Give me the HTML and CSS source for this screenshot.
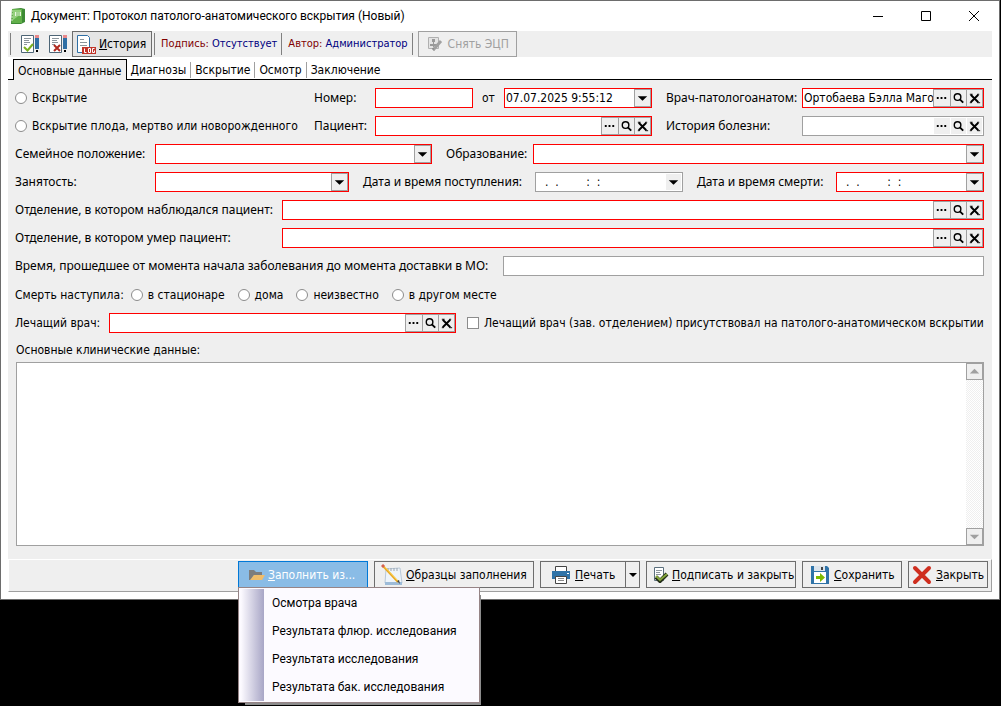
FILE: index.html
```html
<!DOCTYPE html>
<html lang="ru">
<head>
    <meta charset="UTF-8">
    <meta name="viewport" content="width=device-width, initial-scale=1.0">
    <title>Протокол патолого-анатомического вскрытия</title>
    <link rel="stylesheet" href="styles.css">
</head>
<body>
    <!-- shared icons -->
    <svg class="sprite" aria-hidden="true">
        <symbol id="i-dots" viewBox="0 0 16 16"><path d="M3 7h2v2H3zM7 7h2v2H7zM11 7h2v2h-2z"/></symbol>
        <symbol id="i-search" viewBox="0 0 16 16"><circle cx="7" cy="7" r="3.5" fill="none" stroke="#000" stroke-width="1.5"/><path d="M9.5 9.5l3.5 3.5" stroke="#000" stroke-width="2"/></symbol>
        <symbol id="i-clear" viewBox="0 0 16 16"><path d="M4 4.5l8 8M12 4.5l-8 8" stroke="#000" stroke-width="2"/><path d="M3 4h3M11 4h2M3 13h2M11 13h3" stroke="#000"/></symbol>
        <symbol id="i-down" viewBox="0 0 16 16"><path d="M3 6h10L8 11z"/></symbol>
    </svg>

    <div class="window">
        <header class="titlebar">
            <svg class="app-icon" viewBox="0 0 16 18"><path d="M2 2l9-1 4 1v13l-4 2H1z" fill="#3d8a35"/><path d="M2 2h10v14H2z" fill="#62b04a"/><path d="M3 3h8v4l-8 6z" fill="#93d07c"/><path d="M5 5h6v4H5z" fill="#e8f7df"/><path d="M6 6h4M6 8h4" stroke="#62b04a"/><path d="M1 4h2M1 7h2M1 10h2M1 13h2" stroke="#d6ecc9"/></svg>
            <h1>Документ: Протокол патолого-анатомического вскрытия (Новый)</h1>
            <div class="win-buttons">
                <button aria-label="Свернуть"><svg viewBox="0 0 12 12"><path d="M1 6.5h10" stroke="#000"/></svg></button>
                <button aria-label="Развернуть"><svg viewBox="0 0 12 12"><path d="M1.5 1.5h9v9h-9z" fill="none" stroke="#000"/></svg></button>
                <button aria-label="Закрыть окно"><svg viewBox="0 0 12 12"><path d="M1 1l10 10M11 1L1 11" stroke="#000"/></svg></button>
            </div>
        </header>

        <div class="toolbar">
            <span class="sep first"></span>
            <button class="tool" aria-label="Подписать"><svg viewBox="0 0 20 20"><path d="M1.500 1.500h12v17h-12z" fill="#fff" stroke="#4d6576"/><path d="M4 4.500h7M4 6.500h5M4 8.500h6M4 10.500h3" stroke="#8b959c"/><path d="M4 13l3.500 3.500L13 10" fill="none" stroke="#7ab020" stroke-width="2"/><path d="M15 4h4v11h-4z" fill="#2f6fa5"/><path d="M15 1h4v3h-4z" fill="#e8888a"/><path d="M16 16h2v2h-2z"/></svg></button>
            <button class="tool" aria-label="Отменить подпись"><svg viewBox="0 0 20 20"><path d="M1.500 1.500h12v17h-12z" fill="#fff" stroke="#4d6576"/><path d="M4 4.500h7M4 6.500h5M4 8.500h6M4 10.500h3" stroke="#8b959c"/><path d="M6 11l6 6M12 11l-6 6" stroke="#b02a20" stroke-width="2"/><path d="M15 4h4v11h-4z" fill="#2f6fa5"/><path d="M15 1h4v3h-4z" fill="#e8888a"/><path d="M16 16h2v2h-2z"/></svg></button>
            <button class="btn history"><svg class="log-icon" viewBox="0 0 20 20"><path d="M1.500 1.500h10l2 2v15h-12z" fill="#fff" stroke="#2f6fa5"/><path d="M4 5.500h4M4 8.500h7M4 11.500h7" stroke="#8b959c"/><path d="M6 13h14v7H6z" fill="#c0342a"/><path d="M8.500 14.500v4h2M12.500 14.500h2v4h-2zM18.500 14.500h-2v4h2v-2" fill="none" stroke="#fff"/></svg><span><u>И</u>стория</span></button>
            <span class="sep"></span>
            <span class="info"><b>Подпись:</b> Отсутствует</span>
            <span class="sep"></span>
            <span class="info"><b>Автор:</b> Администратор</span>
            <span class="sep"></span>
            <button class="btn unsign" disabled><svg class="icon" viewBox="0 0 16 16"><path d="M1.500 1.500h10v11h-10z" fill="#e4e4e4" stroke="#b0b0b0"/><path d="M5 3h3v3H5zM3 8h7v2H3zM6 6h1v5H6z" fill="#999"/><path d="M14 5l-7 8" stroke="#a0a0a0" stroke-width="3"/><path d="M6 12v2h2" fill="none" stroke="#777"/></svg><span>Снять ЭЦП</span></button>
        </div>

        <nav class="tabs">
            <button class="tab active">Основные данные</button>
            <button class="tab">Диагнозы</button>
            <button class="tab">Вскрытие</button>
            <button class="tab">Осмотр</button>
            <button class="tab">Заключение</button>
        </nav>

        <main class="form">
            <div class="row head">
                <label class="choice"><input type="radio" name="kind">Вскрытие</label>
                <label for="number">Номер:</label>
                <div class="pair">
                    <div class="field required num"><input type="text" id="number"></div>
                    <label for="date">от</label>
                    <div class="field required grow"><input type="text" id="date" value="07.07.2025 9:55:12"><button class="drop" aria-label="Календарь"><svg><use href="#i-down"/></svg></button></div>
                </div>
                <label class="next" for="pathologist">Врач-патологоанатом:</label>
                <div class="field required"><input type="text" id="pathologist" value="Ортобаева Бэлла Магомедовна"><div class="lookup"><button aria-label="Выбрать"><svg><use href="#i-dots"/></svg></button><button aria-label="Найти"><svg><use href="#i-search"/></svg></button><button aria-label="Очистить"><svg><use href="#i-clear"/></svg></button></div></div>
            </div>
            <div class="row head">
                <label class="choice"><input type="radio" name="kind">Вскрытие плода, мертво или новорожденного</label>
                <label for="patient">Пациент:</label>
                <div class="field required"><input type="text" id="patient"><div class="lookup"><button aria-label="Выбрать"><svg><use href="#i-dots"/></svg></button><button aria-label="Найти"><svg><use href="#i-search"/></svg></button><button aria-label="Очистить"><svg><use href="#i-clear"/></svg></button></div></div>
                <label class="next" for="case">История болезни:</label>
                <div class="field"><input type="text" id="case"><div class="lookup"><button aria-label="Выбрать"><svg><use href="#i-dots"/></svg></button><button aria-label="Найти"><svg><use href="#i-search"/></svg></button><button aria-label="Очистить"><svg><use href="#i-clear"/></svg></button></div></div>
            </div>
            <div class="row family">
                <label for="marital">Семейное положение:</label>
                <div class="field required"><select id="marital"><option></option></select><span class="drop"><svg><use href="#i-down"/></svg></span></div>
                <label class="next" for="education">Образование:</label>
                <div class="field required"><select id="education"><option></option></select><span class="drop"><svg><use href="#i-down"/></svg></span></div>
            </div>
            <div class="row dates">
                <label for="job">Занятость:</label>
                <div class="field required"><select id="job"><option></option></select><span class="drop"><svg><use href="#i-down"/></svg></span></div>
                <label class="next" for="admitted">Дата и время поступления:</label>
                <div class="field"><input class="mask" type="text" id="admitted" value=".  .        :  :"><button class="drop" aria-label="Календарь"><svg><use href="#i-down"/></svg></button></div>
                <label class="next" for="died">Дата и время смерти:</label>
                <div class="field required"><input class="mask" type="text" id="died" value=".  .        :  :"><button class="drop" aria-label="Календарь"><svg><use href="#i-down"/></svg></button></div>
            </div>
            <div class="row dept">
                <label for="dept1">Отделение, в котором наблюдался пациент:</label>
                <div class="field required"><input type="text" id="dept1"><div class="lookup"><button aria-label="Выбрать"><svg><use href="#i-dots"/></svg></button><button aria-label="Найти"><svg><use href="#i-search"/></svg></button><button aria-label="Очистить"><svg><use href="#i-clear"/></svg></button></div></div>
            </div>
            <div class="row dept">
                <label for="dept2">Отделение, в котором умер пациент:</label>
                <div class="field required"><input type="text" id="dept2"><div class="lookup"><button aria-label="Выбрать"><svg><use href="#i-dots"/></svg></button><button aria-label="Найти"><svg><use href="#i-search"/></svg></button><button aria-label="Очистить"><svg><use href="#i-clear"/></svg></button></div></div>
            </div>
            <div class="row elapsed">
                <label for="elapsed">Время, прошедшее от момента начала заболевания до момента доставки в МО:</label>
                <div class="field"><input type="text" id="elapsed"></div>
            </div>
            <div class="row place">
                <span>Смерть наступила:</span>
                <label class="choice"><input type="radio" name="place">в стационаре</label>
                <label class="choice"><input type="radio" name="place">дома</label>
                <label class="choice"><input type="radio" name="place">неизвестно</label>
                <label class="choice"><input type="radio" name="place">в другом месте</label>
            </div>
            <div class="row doctor">
                <label for="doctor">Лечащий врач:</label>
                <div class="field required"><input type="text" id="doctor"><div class="lookup"><button aria-label="Выбрать"><svg><use href="#i-dots"/></svg></button><button aria-label="Найти"><svg><use href="#i-search"/></svg></button><button aria-label="Очистить"><svg><use href="#i-clear"/></svg></button></div></div>
                <label class="choice"><input type="checkbox">Лечащий врач (зав. отделением) присутствовал на патолого-анатомическом вскрытии</label>
            </div>
            <div class="clinical">
                <label for="clinical">Основные клинические данные:</label>
                <div class="memo">
                    <textarea id="clinical"></textarea>
                    <div class="scroll">
                        <button aria-label="Вверх"><svg viewBox="0 0 16 16"><path d="M3 10h10L8 5z" fill="#a0a0a0"/></svg></button>
                        <button aria-label="Вниз"><svg viewBox="0 0 16 16"><path d="M3 6h10L8 11z" fill="#a0a0a0"/></svg></button>
                    </div>
                </div>
            </div>
        </main>

        <footer class="actions">
            <div class="fill">
                <button class="btn open"><svg class="icon" viewBox="0 0 16 16"><path d="M0 3h5l2 2h6v3H5l-3 5H0z" fill="#7d7d7d"/><path d="M5 8h11l-3 5H1z" fill="#f0bd6a"/></svg><span><u>З</u>аполнить из...</span></button>
                <div class="menu">
                    <button>Осмотра врача</button>
                    <button>Результата флюр. исследования</button>
                    <button>Результата исследования</button>
                    <button>Результата бак. исследования</button>
                </div>
            </div>
            <button class="btn samples"><svg class="big" viewBox="0 0 22 22"><path d="M5 5l14-1 2 15H4z" fill="#eef4fa" stroke="#b9c8d8"/><path d="M4 18h17v3H4z" fill="#9dbbd8"/><path d="M7 4v3M10 4v3M13 4v3M16 4v3" stroke="#9aa3ad"/><path d="M2 2l15 16" stroke="#e9a820" stroke-width="2"/><path d="M2 1l15 16" stroke="#ffd75e"/><path d="M1 1l2 2" stroke="#d4614f" stroke-width="3"/><path d="M16 17l3 3-1-4z" fill="#444"/></svg><span><u>О</u>бразцы заполнения</span></button>
            <div class="split">
                <button class="btn print"><svg class="big" viewBox="0 0 22 22"><path d="M5.500 2.500h11v6h-11z" fill="#fff" stroke="#444"/><path d="M2 7h18v8H2z" fill="#2f73a8"/><path d="M17 9h2v1h-2z" fill="#fff"/><path d="M5.500 12.500h11v7h-11z" fill="#fff" stroke="#444"/><path d="M8 14.500h6M8 16.500h6" stroke="#888"/></svg><span><u>П</u>ечать</span></button>
                <button class="btn more" aria-label="Ещё"><svg class="arrow" viewBox="0 0 8 8"><path d="M0 2h8L4 6z"/></svg></button>
            </div>
            <button class="btn sign"><svg class="icon" viewBox="0 0 16 16"><path d="M1.500.500h9v13h-9z" fill="#fff" stroke="#5b6f7d"/><path d="M3 3.500h6M3 5.500h4M3 7.500h5" stroke="#8b959c"/><path d="M3 10l4 4 7-7" fill="none" stroke="#26301a" stroke-width="4"/><path d="M3 9l4 4 7-6" fill="none" stroke="#86a83c" stroke-width="2"/></svg><span><u>П</u>одписать и закрыть</span></button>
            <button class="btn save"><svg class="big" viewBox="0 0 22 22"><path d="M2 2h16l2 2v16H2z" fill="#2f73a8"/><path d="M5 2h11v5H5z" fill="#dbe4ec"/><path d="M12 3h2v3h-2z" fill="#444"/><path d="M5 8h12v11H5z" fill="#fff"/><path d="M7 12h4V9l5 4.500-5 4.500v-3H7z" fill="#7fba00"/></svg><span><u>С</u>охранить</span></button>
            <button class="btn close"><svg class="big" viewBox="0 0 22 22"><path d="M4 4l14 14M18 4L4 18" stroke="#cf2e1f" stroke-width="4" stroke-linecap="round"/></svg><span><u>З</u>акрыть</span></button>
        </footer>
    </div>
</body>
</html>
```
FILE: styles.css
```css
* {
    box-sizing: border-box;
}

body {
    min-height: 100vh;
    margin: 0;
    background: #000;
    color: #000;
    font-family: "DejaVu Sans Condensed", sans-serif;
    font-size: 12px;
    line-height: 16px;
}

button,
input,
select,
textarea {
    font: inherit;
    color: inherit;
    margin: 0;
    padding: 0;
    border: none;
    background: none;
    border-radius: 0;
    outline: none;
}

svg {
    display: block;
    flex: none;
}

.sprite {
    display: none;
}

.window {
    margin-right: 1px;
    padding: 0 7px 7px;
    background: #fff;
    border: 1px solid #6d6d6d;
}

/* title bar */
.titlebar {
    display: flex;
    align-items: center;
    height: 30px;
}

.app-icon {
    width: 16px;
    height: 18px;
    margin: 0 5px 0 2px;
}

.titlebar h1 {
    flex: 1;
    margin: 0;
    font-family: Roboto, sans-serif;
    font-size: 12px;
    font-weight: normal;
}

.win-buttons {
    display: flex;
    margin-right: -6px;
}

.win-buttons button {
    display: flex;
    justify-content: center;
    width: 48px;
}

.win-buttons svg {
    width: 12px;
    height: 12px;
}

/* toolbar */
.toolbar {
    display: flex;
    align-items: center;
    height: 26px;
    background: #efefef;
}

.sep {
    width: 1px;
    height: 22px;
    margin: 0 2px;
    background: #808080;
}

.sep.first {
    margin-right: 9px;
}

.tool {
    width: 20px;
}

.tool + .tool {
    margin: 0 4px 0 8px;
}

.tool svg,
.log-icon {
    width: 20px;
    height: 20px;
}

.info {
    padding: 0 2px 0 4px;
    font-size: 11px;
    color: #000080;
}

.info b {
    font-weight: normal;
    color: #800000;
}

.btn {
    display: flex;
    align-items: center;
    gap: 3px;
    height: 26px;
    padding: 0 4px;
    border: 1px solid #6d6d6d;
    background: #efefef;
    white-space: nowrap;
}

.btn.unsign {
    gap: 5px;
    width: 99px;
    margin-left: 3px;
    padding-left: 8px;
    border-color: #a0a0a0;
    color: #a0a0a0;
}

.btn.history {
    width: 80px;
    padding: 0 3px;
    background: #e5e5e5;
}

.icon {
    width: 16px;
    height: 16px;
}

.big {
    width: 22px;
    height: 22px;
}

/* tabs */
.tabs {
    display: flex;
    align-items: flex-end;
    height: 23px;
    padding-left: 5px;
    border-bottom: 1px solid #000;
}

.tab {
    height: 16px;
    margin-bottom: 1px;
    padding: 0 4px;
    white-space: nowrap;
}

.tab + .tab + .tab {
    border-left: 1px solid #a0a0a0;
}

.tab.active {
    height: 21px;
    margin-bottom: -1px;
    padding-top: 2px;
    background: #efefef;
    border: 1px solid #000;
    border-bottom: none;
}

/* form */
.form {
    display: flex;
    flex-direction: column;
    gap: 8px;
    padding: 8px 8px 13px 7px;
    background: #efefef;
}

.row {
    display: grid;
    align-items: center;
    height: 20px;
    white-space: nowrap;
}

.row > label {
    font-family: "Noto Sans", sans-serif;
}

.row > .choice,
.doctor > label {
    font-family: inherit;
}

.row.head {
    grid-template-columns: 299px 61px 277px 150px 1fr;
}

.row.family {
    grid-template-columns: 140px 277px 101px 1fr;
}

.row.dates {
    grid-template-columns: 140px 194px 186px 148px 153px 1fr;
}

.row.dept {
    grid-template-columns: 267px 1fr;
}

.row.elapsed {
    grid-template-columns: 488px 1fr;
}

.row.doctor {
    grid-template-columns: 94px 347px 1fr;
}

.row.place {
    display: flex;
    height: 21px;
}

.place .choice {
    margin-left: 7px;
}

.place .choice + .choice {
    margin-left: 13px;
}

.doctor .choice {
    padding-left: 11px;
}

.next {
    padding-left: 14px;
}

.pair {
    display: flex;
    align-items: center;
}

.pair label {
    width: 31px;
    padding-left: 9px;
}

.pair .num {
    width: 98px;
}

.grow {
    flex: 1;
}

.field {
    display: flex;
    min-width: 0;
    height: 20px;
    background: #fff;
    border: 1px solid #a0a0a0;
}

.field.required {
    border-color: #f00;
}

.field input,
.field select {
    flex: 1;
    width: 0;
    min-width: 0;
    padding-left: 1px;
    appearance: none;
}

.field .mask {
    padding-left: 9px;
    white-space: pre;
}

.drop {
    width: 17px;
    background: #efefef;
    border: 1px solid #fff;
}

.lookup {
    display: flex;
    width: 50px;
    border: 1px solid #fff;
}

.lookup button {
    width: 16px;
    background: #efefef;
}

.lookup button + button {
    border-left: 1px solid #fff;
}

.required .drop,
.required .lookup,
.required .lookup button + button {
    border-color: #a0a0a0;
}

.drop svg,
.lookup svg {
    width: 15px;
    height: 16px;
}

.choice {
    display: flex;
    align-items: center;
    gap: 5px;
}

.choice input {
    flex: none;
    width: 12px;
    height: 12px;
    appearance: none;
    background: #fff;
    border: 1px solid #8c8c8c;
}

.choice input[type="radio"] {
    border-radius: 50%;
}

.clinical {
    display: flex;
    flex-direction: column;
    gap: 4px;
    padding: 1px 0 0 1px;
}

.memo {
    display: flex;
    height: 184px;
    background: #fff;
    border: 1px solid #a0a0a0;
}

.memo textarea {
    flex: 1;
    resize: none;
}

.scroll {
    display: flex;
    flex-direction: column;
    justify-content: space-between;
    width: 17px;
    background: repeating-conic-gradient(#efefef 0 25%, #fff 0 50%) 0 0 / 2px 2px;
}

.scroll button {
    height: 17px;
    background: #efefef;
    border: 1px solid #a0a0a0;
}

/* bottom buttons */
.actions {
    display: flex;
    justify-content: flex-end;
    gap: 6px;
    height: 33px;
    padding: 1px 3px 0 0;
    background: #efefef;
    border: 1px solid #a0a0a0;
    border-top-color: #fff;
    border-left-color: #fff;
}

.actions .btn {
    height: 27px;
    padding: 0 6px;
}

.fill {
    position: relative;
}

.actions .open {
    width: 130px;
    padding-left: 10px;
    background: #8abce6;
    border-color: #0078d7;
    color: #fff;
}

.samples {
    width: 160px;
}

.split {
    display: flex;
}

.print {
    width: 86px;
}

.actions .print {
    padding-left: 9px;
}

.actions .more {
    width: 15px;
    margin-left: -1px;
    padding: 0 3px;
}

.arrow {
    width: 8px;
    height: 8px;
}

.sign {
    width: 150px;
}

.save {
    width: 100px;
}

.close {
    width: 80px;
}

.actions .close {
    padding: 0 2px;
}

/* drop-down menu of the first button */
.menu {
    position: absolute;
    top: 26px;
    left: 0;
    width: 242px;
    padding: 1px 2px;
    background: linear-gradient(90deg, #fcfaff, #a8a6c6) 2px 1px / 23px 112px no-repeat #fcfaff;
    border: 1px solid #968486;
    box-shadow: 4px 5px 0 -3px #8c8c8c;
    font-family: Roboto, sans-serif;
}

.menu button {
    display: block;
    width: 100%;
    height: 28px;
    padding-left: 31px;
    text-align: left;
}
```
